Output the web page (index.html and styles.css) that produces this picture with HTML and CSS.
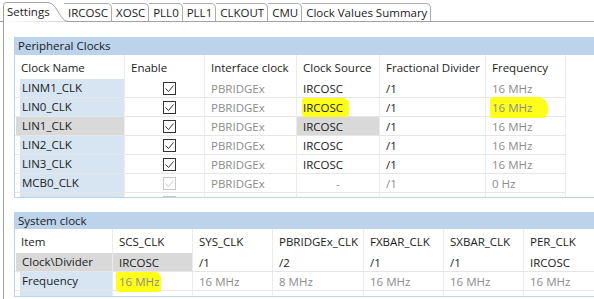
FILE: index.html
```html
<!DOCTYPE html>
<html lang="en">
<head>
    <meta charset="UTF-8">
    <title>Clock Settings</title>
    <link rel="stylesheet" href="styles.css">
</head>
<body>
    <div class="tabs">
        <div class="tab tab-active">
            <svg class="tab-shape" width="66" height="20" viewBox="0 0 66 20">
                <path d="M0.5,20 V3.5 Q0.5,0.5 3.5,0.5 H43 C49,0.5 51,3 55,9.5 C59,16 61,19.5 66,19.5" fill="#fff" stroke="#a0a0a0"/>
            </svg>
            <span>Settings</span>
        </div>
        <div class="tab tab-first">IRCOSC</div>
        <div class="tab">XOSC</div>
        <div class="tab">PLL0</div>
        <div class="tab">PLL1</div>
        <div class="tab">CLKOUT</div>
        <div class="tab">CMU</div>
        <div class="tab">Clock Values Summary</div>
    </div>

    <div class="panel">
        <div class="group">
            <div class="group-title">Peripheral Clocks</div>
            <div class="group-body periph">
                <table class="grid">
                    <colgroup>
                        <col style="width:110px"><col style="width:80px"><col style="width:92px">
                        <col style="width:83px"><col style="width:106px"><col style="width:80px">
                    </colgroup>
                    <thead>
                        <tr><th>Clock Name</th><th>Enable</th><th>Interface clock</th><th>Clock Source</th><th>Fractional Divider</th><th>Frequency</th></tr>
                    </thead>
                    <tbody>
                        <tr>
                            <td class="name"><span>LINM1_CLK</span></td>
                            <td class="check"><svg width="13" height="13"><rect x="0.5" y="0.5" width="12" height="12" fill="#fff" stroke="#333"/><path d="M2.5,6.5 L5.5,9.5 L10.5,3.5" fill="none" stroke="#333"/></svg></td>
                            <td class="dim">PBRIDGEx</td><td>IRCOSC</td><td>/1</td><td class="dim">16 MHz</td>
                        </tr>
                        <tr>
                            <td class="name"><span>LIN0_CLK</span></td>
                            <td class="check"><svg width="13" height="13"><rect x="0.5" y="0.5" width="12" height="12" fill="#fff" stroke="#333"/><path d="M2.5,6.5 L5.5,9.5 L10.5,3.5" fill="none" stroke="#333"/></svg></td>
                            <td class="dim">PBRIDGEx</td><td><mark class="hl hl-src">IRCOSC</mark></td><td>/1</td><td class="dim"><mark class="hl hl-freq">16 MHz</mark></td>
                        </tr>
                        <tr class="selected">
                            <td class="name"><span>LIN1_CLK</span></td>
                            <td class="check"><svg width="13" height="13"><rect x="0.5" y="0.5" width="12" height="12" fill="#fff" stroke="#333"/><path d="M2.5,6.5 L5.5,9.5 L10.5,3.5" fill="none" stroke="#333"/></svg></td>
                            <td class="dim">PBRIDGEx</td><td class="sel-cell">IRCOSC</td><td>/1</td><td class="dim">16 MHz</td>
                        </tr>
                        <tr>
                            <td class="name"><span>LIN2_CLK</span></td>
                            <td class="check"><svg width="13" height="13"><rect x="0.5" y="0.5" width="12" height="12" fill="#fff" stroke="#333"/><path d="M2.5,6.5 L5.5,9.5 L10.5,3.5" fill="none" stroke="#333"/></svg></td>
                            <td class="dim">PBRIDGEx</td><td>IRCOSC</td><td>/1</td><td class="dim">16 MHz</td>
                        </tr>
                        <tr>
                            <td class="name"><span>LIN3_CLK</span></td>
                            <td class="check"><svg width="13" height="13"><rect x="0.5" y="0.5" width="12" height="12" fill="#fff" stroke="#333"/><path d="M2.5,6.5 L5.5,9.5 L10.5,3.5" fill="none" stroke="#333"/></svg></td>
                            <td class="dim">PBRIDGEx</td><td>IRCOSC</td><td>/1</td><td class="dim">16 MHz</td>
                        </tr>
                        <tr>
                            <td class="name"><span>MCB0_CLK</span></td>
                            <td class="check"><svg width="13" height="13"><rect x="0.5" y="0.5" width="12" height="12" fill="#fff" stroke="#c8c8c8"/><path d="M2.5,6.5 L5.5,9.5 L10.5,3.5" fill="none" stroke="#c8c8c8"/></svg></td>
                            <td class="dim">PBRIDGEx</td><td class="dim center">-</td><td class="dim">/1</td><td class="dim">0 Hz</td>
                        </tr>
                        <tr>
                            <td class="name"><span></span></td>
                            <td class="check"><svg width="13" height="13"><rect x="0.5" y="0.5" width="12" height="12" fill="#fff" stroke="#c8c8c8"/></svg></td>
                            <td></td><td></td><td></td><td></td>
                        </tr>
                    </tbody>
                </table>
            </div>
        </div>

        <div class="group">
            <div class="group-title title-sys">System clock</div>
            <div class="group-body system">
                <table class="grid grid-wide">
                    <colgroup>
                        <col style="width:98px"><col style="width:80px"><col style="width:80px"><col style="width:91px">
                        <col style="width:80px"><col style="width:80px"><col>
                    </colgroup>
                    <thead>
                        <tr><th>Item</th><th>SCS_CLK</th><th>SYS_CLK</th><th>PBRIDGEx_CLK</th><th>FXBAR_CLK</th><th>SXBAR_CLK</th><th>PER_CLK</th></tr>
                    </thead>
                    <tbody>
                        <tr class="selected">
                            <td class="name"><span>Clock\Divider</span></td><td class="sel-cell">IRCOSC</td><td>/1</td><td>/2</td><td>/1</td><td>/1</td><td>IRCOSC</td>
                        </tr>
                        <tr>
                            <td class="name"><span>Frequency</span></td><td class="dim"><mark class="hl hl-sys">16 MHz</mark></td><td class="dim">16 MHz</td><td class="dim">8 MHz</td><td class="dim">16 MHz</td><td class="dim">16 MHz</td><td class="dim">16 MHz</td>
                        </tr>
                        <tr>
                            <td class="name"><span></span></td><td></td><td></td><td></td><td></td><td></td><td></td>
                        </tr>
                    </tbody>
                </table>
            </div>
        </div>
    </div>
</body>
</html>
```

FILE: styles.css
```css
html, body {
    height: 100%;
}
body {
    margin: 0;
    background-color: #fff;
    font-family: "Segoe UI", "Open Sans", sans-serif;
    font-size: 11.5px;
    color: #1b1b1b;
    overflow: hidden;
}
.tabs {
    display: flex;
    align-items: flex-end;
    height: 21px;
    padding-left: 3px;
    border-bottom: 1px solid #a0a0a0;
}
.tab {
    height: 18px;
    line-height: 17px;
    padding: 0 3px 0 4px;
    border: 1px solid #acacac;
    border-left: none;
    border-bottom: none;
    border-top-right-radius: 5px;
    box-sizing: border-box;
    white-space: nowrap;
}
.tab-first {
    padding-left: 4px;
}
.tab-active {
    position: relative;
    height: 20px;
    width: 62px;
    margin-bottom: -1px;
    margin-right: -1px;
    border: none;
    padding: 0 0 0 4px;
    line-height: 20px;
    z-index: 1;
}
.tab-active span {
    position: relative;
}
.tab-shape {
    position: absolute;
    left: 0;
    top: 0;
}
.panel {
    margin-left: 3px;
    border-left: 1px solid #a0a0a0;
    padding: 15px 0 0 10px;
    height: calc(100% - 22px);
    box-sizing: border-box;
}
.group {
    margin-bottom: 14px;
}
.group-title {
    height: 18px;
    line-height: 18px;
    padding-left: 4px;
    background-color: #bcd3eb;
}
.title-sys {
    height: 17px;
    line-height: 17px;
}
.group-body {
    border-left: 1px solid #bcd3eb;
    border-bottom: 1px solid #bcd3eb;
    overflow: hidden;
}
.periph {
    height: 142px;
}
.system {
    height: 67px;
}
.grid {
    border-collapse: separate;
    border-spacing: 0;
    table-layout: fixed;
    width: 551px;
}
.grid-wide {
    width: 580px;
}
.grid th {
    height: 24px;
    padding: 0 0 0 6px;
    text-align: left;
    font-weight: normal;
    color: #1b1b1b;
    border-right: 1px solid #ececec;
    box-sizing: border-box;
}
.grid td {
    height: 19px;
    padding: 0 0 0 6px;
    border-right: 1px solid #ececec;
    border-bottom: 1px solid #e6e6e6;
    box-sizing: border-box;
    white-space: nowrap;
}
.grid td.name {
    padding: 0;
}
.name span {
    display: block;
    height: 18px;
    line-height: 18px;
    margin-left: 5px;
    padding-left: 2px;
    background-color: #d7e4f2;
}
.selected .name span {
    margin-left: 1px;
    padding-left: 6px;
    background-color: #d9d9d9;
}
.grid td.sel-cell {
    background-color: #d9d9d9;
    background-clip: content-box;
    padding-left: 0;
    text-indent: 6px;
}
.grid td.check {
    padding-left: 38px;
    line-height: 0;
}
.dim {
    color: #8c8c8c;
}
.grid td.center {
    text-align: center;
    padding-left: 0;
}
.hl {
    background-color: #ffff1a;
    color: inherit;
    border-radius: 2px 6px 4px 3px;
}
.hl-src {
    padding: 2px 6px 2px 1px;
    margin-left: -1px;
}
.hl-freq {
    padding: 3px 16px 3px 2px;
    margin-left: -2px;
    border-radius: 3px 10px 6px 2px;
}
.hl-sys {
    padding: 2px 2px 3px 3px;
    margin-left: -3px;
}
```
